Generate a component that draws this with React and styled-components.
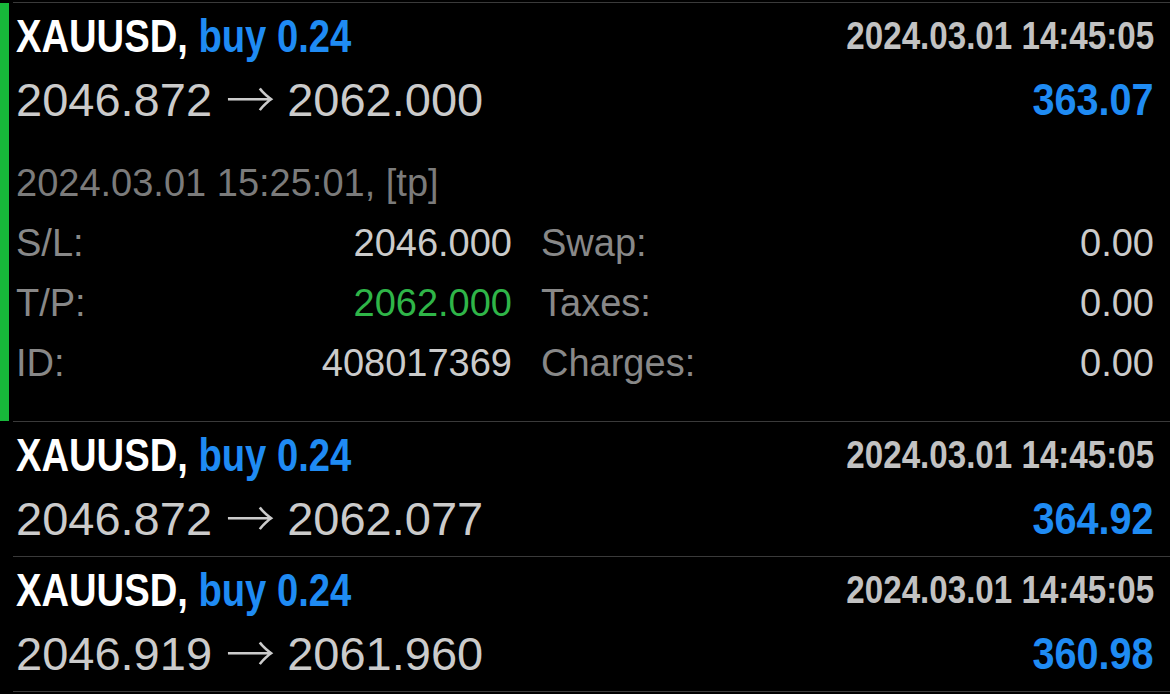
import React from "react";
import styled, { createGlobalStyle } from "styled-components";

const GlobalStyle = createGlobalStyle`
  html, body {
    margin: 0;
    padding: 0;
    background: #000;
  }
  body {
    font-family: "Liberation Sans", Arial, sans-serif;
    -webkit-font-smoothing: antialiased;
  }
`;

const List = styled.div`
  display: flex;
  flex-direction: column;
  padding-top: 2px;
  width: 1170px;
  background: #000;
`;

const Item = styled.div`
  display: flex;
  align-items: stretch;
`;

const Accent = styled.div`
  width: 9px;
  flex: 0 0 9px;
  margin-top: 1px;
  background: ${(p) => (p.$on ? "#17b83a" : "transparent")};
`;

const Body = styled.div`
  flex: 1;
  min-width: 0;
  margin-left: 4px;
  padding: 5px 16px ${(p) => (p.$expanded ? "28px" : "1px")} 3px;
  border-top: 1px solid #3a3a3a;
  border-bottom: ${(p) => (p.$last ? "1px solid #3a3a3a" : "none")};
`;

const HeadRow = styled.div`
  display: flex;
  justify-content: space-between;
  align-items: center;
  height: 56px;
  line-height: 56px;
`;

/* Helvetica Neue Condensed Bold look: bold sans narrowed horizontally */
const Condensed = styled.span`
  display: inline-block;
  font-family: "Liberation Sans", Arial, sans-serif;
  font-weight: 700;
  white-space: nowrap;
  transform: scaleX(${(p) => p.$sx});
  transform-origin: ${(p) => p.$origin || "left"} center;
`;

const Symbol = styled(Condensed)`
  font-size: 46px;
  color: #ffffff;
`;

const Side = styled.span`
  color: #1f8bf3;
`;

const OpenTime = styled(Condensed)`
  font-size: 39px;
  color: #c2c2c2;
`;

const PriceRow = styled.div`
  display: flex;
  justify-content: space-between;
  align-items: center;
  height: 72px;
  line-height: 72px;
`;

const Prices = styled.span`
  font-size: 47px;
  color: #cbcbcb;
  white-space: nowrap;
`;

const Arrow = styled.span`
  font-family: "Noto Sans CJK JP", "DejaVu Sans", sans-serif;
  font-weight: 300;
  font-size: 49px;
  line-height: 0;
  vertical-align: -2px;
  margin: 0 -1px 0 1px;
`;

const Profit = styled(Condensed)`
  font-size: 45px;
  color: ${(p) => (p.$loss ? "#e0413a" : "#1f8bf3")};
`;

const Details = styled.div`
  margin-top: 17px;
`;

const CloseTime = styled.div`
  font-size: 38px;
  line-height: 60px;
  height: 60px;
  color: #7b7b7b;
  white-space: nowrap;
`;

const DetailGrid = styled.div`
  display: grid;
  grid-template-columns: 496px 1fr;
  column-gap: 29px;
`;

const Pair = styled.div`
  display: flex;
  justify-content: space-between;
  height: 60px;
  line-height: 60px;
  font-size: 38px;
  white-space: nowrap;
`;

const Label = styled.span`
  color: #888888;
`;

const Value = styled.span`
  color: ${(p) => p.$color || "#cbcbcb"};
`;

const trades = [
  {
    symbol: "XAUUSD",
    side: "buy 0.24",
    time: "2024.03.01 14:45:05",
    open: "2046.872",
    close: "2062.000",
    profit: "363.07",
    expanded: true,
    closeTime: "2024.03.01 15:25:01, [tp]",
    sl: "2046.000",
    tp: "2062.000",
    id: "408017369",
    swap: "0.00",
    taxes: "0.00",
    charges: "0.00",
  },
  {
    symbol: "XAUUSD",
    side: "buy 0.24",
    time: "2024.03.01 14:45:05",
    open: "2046.872",
    close: "2062.077",
    profit: "364.92",
  },
  {
    symbol: "XAUUSD",
    side: "buy 0.24",
    time: "2024.03.01 14:45:05",
    open: "2046.919",
    close: "2061.960",
    profit: "360.98",
  },
];

export default function App() {
  return (
    <>
      <GlobalStyle />
      <List>
        {trades.map((t, i) => (
          <Item key={i}>
            <Accent $on={t.expanded} />
            <Body $expanded={t.expanded} $last={i === trades.length - 1}>
              <HeadRow>
                <Symbol $sx={0.83}>
                  {t.symbol}, <Side>{t.side}</Side>
                </Symbol>
                <OpenTime $sx={0.85} $origin="right">
                  {t.time}
                </OpenTime>
              </HeadRow>
              <PriceRow>
                <Prices>
                  {t.open} <Arrow>→</Arrow> {t.close}
                </Prices>
                <Profit $sx={0.88} $origin="right">
                  {t.profit}
                </Profit>
              </PriceRow>
              {t.expanded && (
                <Details>
                  <CloseTime>{t.closeTime}</CloseTime>
                  <DetailGrid>
                    <Pair>
                      <Label>S/L:</Label>
                      <Value>{t.sl}</Value>
                    </Pair>
                    <Pair>
                      <Label>Swap:</Label>
                      <Value>{t.swap}</Value>
                    </Pair>
                    <Pair>
                      <Label>T/P:</Label>
                      <Value $color="#2fb548">{t.tp}</Value>
                    </Pair>
                    <Pair>
                      <Label>Taxes:</Label>
                      <Value>{t.taxes}</Value>
                    </Pair>
                    <Pair>
                      <Label>ID:</Label>
                      <Value>{t.id}</Value>
                    </Pair>
                    <Pair>
                      <Label>Charges:</Label>
                      <Value>{t.charges}</Value>
                    </Pair>
                  </DetailGrid>
                </Details>
              )}
            </Body>
          </Item>
        ))}
      </List>
    </>
  );
}
